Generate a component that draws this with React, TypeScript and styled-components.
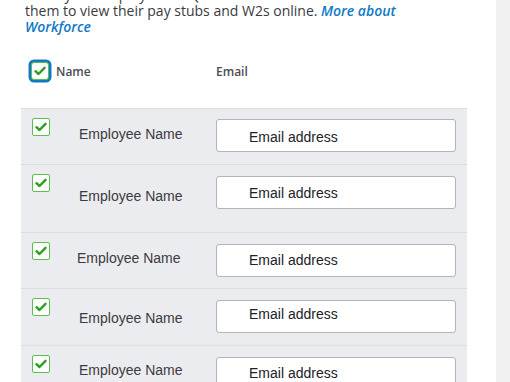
import React from "react";
import styled, { createGlobalStyle, css } from "styled-components";

const Global = createGlobalStyle`
  html, body { margin: 0; padding: 0; background: #fff; overflow: hidden; }
  #root { width: 510px; height: 382px; }
`;

const Page = styled.div`
  display: flex;
  width: 510px;
  height: 382px;
  overflow: hidden;
`;

const Main = styled.div`
  width: 496px;
  padding-left: 21px;
  box-sizing: border-box;
  display: flex;
  flex-direction: column;
`;

const Side = styled.div`
  flex: 1;
  background: #f0f0f1;
`;

const Intro = styled.p`
  margin: -13px 0 0 4px;
  font-family: "Open Sans", sans-serif;
  font-size: 14px;
  line-height: 16px;
  color: #393a3d;
  white-space: nowrap;
`;

const Link = styled.a`
  color: #0f7ac6;
  font-style: italic;
  font-weight: 600;
  text-decoration: none;
`;

const Header = styled.div`
  display: flex;
  align-items: center;
  height: 25px;
  margin-top: 25px;
  margin-bottom: 26px;
  padding-left: 8px;
  font-family: "Open Sans", sans-serif;
  font-size: 12px;
  font-weight: 600;
  color: #4b4c51;
`;

const HeadName = styled.span`
  margin-left: 5px;
  width: 160px;
`;

const Box = styled.span<{ $focus?: boolean }>`
  display: inline-flex;
  align-items: center;
  justify-content: center;
  width: 18px;
  height: 18px;
  box-sizing: border-box;
  background: #fff;
  border: 1px solid #5cbf4d;
  border-radius: 2px;
  flex: none;
  ${(p) =>
    p.$focus &&
    css`
      margin: 2px;
      box-shadow: 0 0 0 2.5px #1379c4;
      border-radius: 3px;
    `}
`;

const Check = () => (
  <svg width="12" height="10" viewBox="0 0 12 10">
    <path d="M1.5 5.2 L4.5 8 L10.5 1.8" fill="none" stroke="#2ca01c" strokeWidth="2.4" strokeLinecap="round" strokeLinejoin="round" />
  </svg>
);

const Table = styled.div`
  width: 446px;
  background: #ebecef;
  border-top: 1px solid #dcdde1;
`;

const Row = styled.div<{ $h: number }>`
  display: grid;
  grid-template-columns: 11px 18px 166px 240px;
  align-items: start;
  height: ${(p) => p.$h}px;
  box-sizing: border-box;
  border-bottom: 1px solid #dcdde1;
  padding-top: 9px;
  & > :first-child { grid-column: 2; }
`;

const Name = styled.span<{ $top: number; $left: number }>`
  margin-top: ${(p) => p.$top}px;
  margin-left: ${(p) => p.$left}px;
  font-family: "Liberation Sans", Arial, sans-serif;
  font-size: 14px;
  line-height: 16px;
  color: #3b3b40;
  white-space: nowrap;
`;

const Field = styled.input<{ $shift: number; $top: number }>`
  margin-top: ${(p) => p.$top}px;
  width: 240px;
  height: 33px;
  box-sizing: border-box;
  border: 1px solid #b4b5ba;
  border-radius: 3px;
  background: #fff;
  padding: ${(p) => 8 + p.$shift}px 0 ${(p) => 8 - p.$shift}px 32px;
  font-family: "Liberation Sans", Arial, sans-serif;
  font-size: 14px;
  color: #222226;
  outline: none;
`;

const rows = [
  { h: 56, top: 8, left: 29, shift: 1, ftop: 1 },
  { h: 68, top: 14, left: 29, shift: 0, ftop: 2 },
  { h: 56, top: 8, left: 27, shift: -1, ftop: 2 },
  { h: 57, top: 12, left: 29, shift: -3, ftop: 2 },
  { h: 60, top: 7, left: 29, shift: -1, ftop: 2 },
];

export default function App() {
  return (
    <Page>
      <Global />
      <Main>
        <Intro>
          Invite your employees to QuickBooks Workforce to allow
          <br />
          them to view their pay stubs and W2s online. <Link href="#">More about</Link>
          <br />
          <Link href="#">Workforce</Link>
        </Intro>
        <Header>
          <Box $focus>
            <Check />
          </Box>
          <HeadName>Name</HeadName>
          <span>Email</span>
        </Header>
        <Table>
          {rows.map((r, i) => (
            <Row key={i} $h={r.h}>
              <Box>
                <Check />
              </Box>
              <Name $top={r.top} $left={r.left}>Employee Name</Name>
              <Field $shift={r.shift} $top={r.ftop} readOnly value="Email address" />
            </Row>
          ))}
        </Table>
      </Main>
      <Side />
    </Page>
  );
}
